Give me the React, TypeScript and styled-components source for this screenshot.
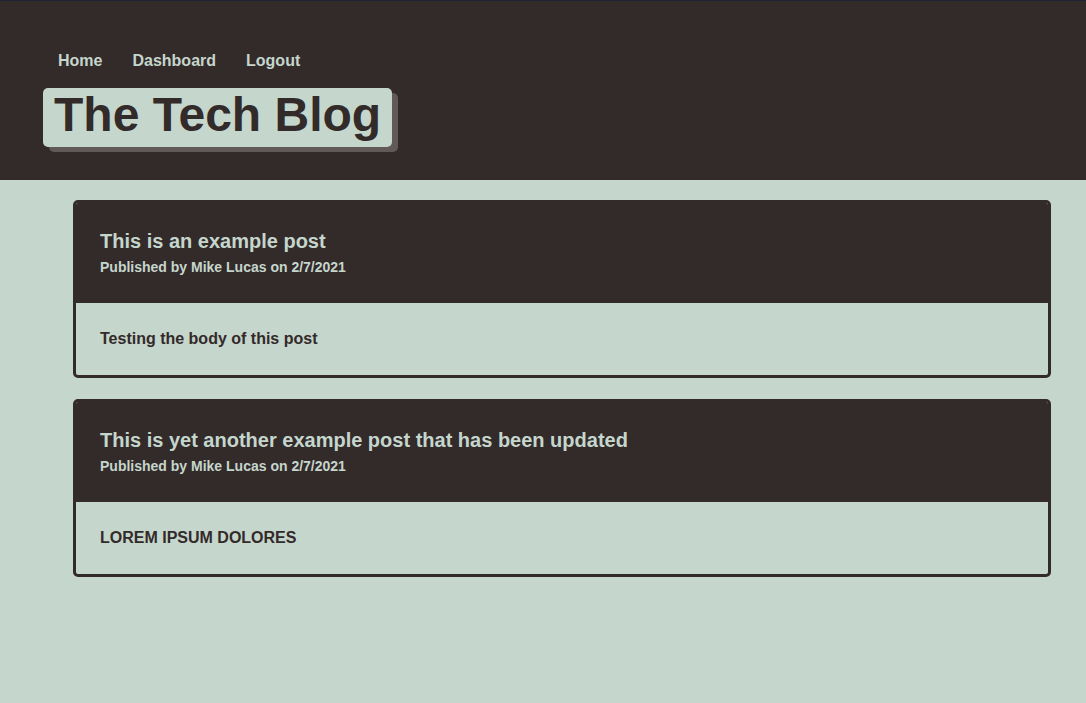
import React from 'react';
import styled, { createGlobalStyle } from 'styled-components';

const DARK = '#332a2a';
const LIGHT = '#c5d6cc';

interface Post {
  id: number;
  title: string;
  author: string;
  date: string;
  body: string;
}

const POSTS: Post[] = [
  {
    id: 1,
    title: 'This is an example post',
    author: 'Mike Lucas',
    date: '2/7/2021',
    body: 'Testing the body of this post',
  },
  {
    id: 2,
    title: 'This is yet another example post that has been updated',
    author: 'Mike Lucas',
    date: '2/7/2021',
    body: 'LOREM IPSUM DOLORES',
  },
];

const NAV_LINKS = ['Home', 'Dashboard', 'Logout'];

const App = () => (
  <>
    <GlobalStyle />
    <Header>
      <Nav>
        {NAV_LINKS.map((label) => (
          <NavLink key={label} href="#">
            {label}
          </NavLink>
        ))}
      </Nav>
      <Title>The Tech Blog</Title>
    </Header>
    <Main>
      {POSTS.map((post) => (
        <Card key={post.id}>
          <CardHeader>
            <PostTitle>{post.title}</PostTitle>
            <Meta>
              Published by {post.author} on {post.date}
            </Meta>
          </CardHeader>
          <CardBody>{post.body}</CardBody>
        </Card>
      ))}
    </Main>
  </>
);

const GlobalStyle = createGlobalStyle`
  html, body {
    margin: 0;
    padding: 0;
    min-height: 100%;
    background: ${LIGHT};
    font-family: 'Liberation Sans', Arial, Helvetica, sans-serif;
  }
`;

const Header = styled.header`
  background: ${DARK};
  border-top: 1px solid #1d2234;
  padding: 51px 58px 33px 43px;
`;

const Nav = styled.nav`
  display: flex;
  gap: 30px;
  padding-left: 15px;
  margin-bottom: 18px;
`;

const NavLink = styled.a`
  color: ${LIGHT};
  font-size: 16px;
  font-weight: bold;
  line-height: 18px;
  text-decoration: none;
`;

const Title = styled.h1`
  display: inline-block;
  margin: 0;
  padding: 3px 11px 8px;
  background: ${LIGHT};
  color: ${DARK};
  font-size: 48px;
  line-height: 48px;
  font-weight: bold;
  border-radius: 5px;
  box-shadow: 6px 5px 0 #625a59;
`;

const Main = styled.main`
  display: flex;
  flex-direction: column;
  gap: 21px;
  padding: 20px 35px 40px 73px;
`;

const Card = styled.article`
  border: 3px solid ${DARK};
  border-radius: 5px;
  overflow: hidden;
`;

const CardHeader = styled.div`
  background: ${DARK};
  color: ${LIGHT};
  padding: 27px 24px 28px;
`;

const PostTitle = styled.h2`
  margin: 0 0 6px;
  font-size: 20px;
  line-height: 23px;
  font-weight: bold;
`;

const Meta = styled.p`
  margin: 0;
  font-size: 14px;
  line-height: 16px;
  font-weight: bold;
`;

const CardBody = styled.div`
  color: ${DARK};
  font-size: 16px;
  line-height: 18px;
  font-weight: bold;
  padding: 27px 24px 27px;
`;

export default App;
